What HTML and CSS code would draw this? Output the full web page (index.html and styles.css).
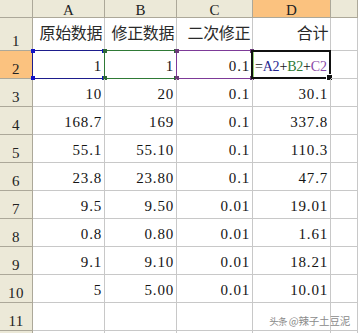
FILE: index.html
```html
<!DOCTYPE html>
<html>
<head>
<meta charset="utf-8">
<link rel="stylesheet" href="styles.css">
</head>
<body>
<div class="sheet">
  <div class="h corner"></div>
  <div class="h col">A</div>
  <div class="h col">B</div>
  <div class="h col">C</div>
  <div class="h col sel">D</div>
  <div class="h col"></div>

  <div class="h row">1</div>
  <div class="c cjk">原始数据</div>
  <div class="c cjk">修正数据</div>
  <div class="c cjk">二次修正</div>
  <div class="c cjk">合计</div>
  <div class="c"></div>

  <div class="h row sel">2</div>
  <div class="c">1<span class="range blue"><i class="hd tl"></i><i class="hd tr"></i><i class="hd bl"></i><i class="hd br"></i></span></div>
  <div class="c">1<span class="range green"><i class="hd tl"></i><i class="hd tr"></i><i class="hd bl"></i><i class="hd br"></i></span></div>
  <div class="c">0.1<span class="range purple"><i class="hd tl"></i><i class="hd tr"></i><i class="hd bl"></i><i class="hd br"></i></span></div>
  <div class="c formula"><span>=</span><span class="fa">A2</span><span>+</span><span class="fb">B2</span><span>+</span><span class="fc">C2</span><span class="caret"></span><span class="active"><i class="fill"></i></span></div>
  <div class="c"></div>

  <div class="h row">3</div>
  <div class="c">10</div><div class="c">20</div><div class="c">0.1</div><div class="c">30.1</div><div class="c"></div>

  <div class="h row">4</div>
  <div class="c">168.7</div><div class="c">169</div><div class="c">0.1</div><div class="c">337.8</div><div class="c"></div>

  <div class="h row">5</div>
  <div class="c">55.1</div><div class="c">55.10</div><div class="c">0.1</div><div class="c">110.3</div><div class="c"></div>

  <div class="h row">6</div>
  <div class="c">23.8</div><div class="c">23.80</div><div class="c">0.1</div><div class="c">47.7</div><div class="c"></div>

  <div class="h row">7</div>
  <div class="c">9.5</div><div class="c">9.50</div><div class="c">0.01</div><div class="c">19.01</div><div class="c"></div>

  <div class="h row">8</div>
  <div class="c">0.8</div><div class="c">0.80</div><div class="c">0.01</div><div class="c">1.61</div><div class="c"></div>

  <div class="h row">9</div>
  <div class="c">9.1</div><div class="c">9.10</div><div class="c">0.01</div><div class="c">18.21</div><div class="c"></div>

  <div class="h row">10</div>
  <div class="c">5</div><div class="c">5.00</div><div class="c">0.01</div><div class="c">10.01</div><div class="c"></div>

  <div class="h row">11</div>
  <div class="c"></div><div class="c"></div><div class="c"></div><div class="c"></div><div class="c"></div>

  <div class="h row"></div>
  <div class="c"></div><div class="c"></div><div class="c"></div><div class="c"></div><div class="c"></div>
</div>
<div class="watermark"><span class="wm-brand">头条</span> @辣子土豆泥</div>
</body>
</html>
```

FILE: styles.css
```css
html, body {
  margin: 0;
  padding: 0;
  background: #ffffff;
  overflow: hidden;
}

body {
  width: 358px;
  height: 333px;
  position: relative;
}

.sheet {
  display: grid;
  height: 333px;
  overflow: hidden;
  grid-template-columns: 33px 72px 72px 76px 78px 1fr;
  grid-template-rows: 18px 33px repeat(10, 28px) 3px;
  font-family: "Liberation Serif", "DejaVu Serif", serif;
  font-size: 15px;
  color: #151515;
}

.c {
  box-sizing: border-box;
  border-right: 1px solid #c8c8c8;
  border-bottom: 1px solid #c8c8c8;
  display: flex;
  justify-content: flex-end;
  align-items: flex-end;
  padding: 0 2px 4px 0;
  line-height: 15px;
  letter-spacing: 0.8px;
  white-space: nowrap;
  position: relative;
  min-height: 0;
}

.cjk {
  font-family: "Noto Sans CJK SC", "Noto Sans CJK JP", sans-serif;
  font-size: 16px;
  line-height: 16px;
  letter-spacing: -0.4px;
  padding: 0 2px 10px 0;
  color: #2a2a2a;
}

.h {
  box-sizing: border-box;
  background: #ece9d8;
  border-right: 1px solid #aca899;
  border-bottom: 1px solid #aca899;
  display: flex;
  justify-content: center;
  align-items: flex-end;
  line-height: 15px;
  color: #222222;
  min-height: 0;
}

.h.col {
  line-height: 13px;
  padding-bottom: 0;
}

.h.row {
  padding-bottom: 1px;
  letter-spacing: 0.4px;
}

.h.sel {
  background: #fbc27f;
}

.range {
  position: absolute;
  left: -1px;
  top: -1px;
  right: -1px;
  bottom: -1px;
  border: 1px solid;
  box-sizing: border-box;
}

.range.blue { border-color: #1d1d8c; }
.range.green { border-color: #2f7a36; }
.range.purple { border-color: #7d3a98; }

.hd {
  position: absolute;
  width: 4px;
  height: 4px;
}

.blue .hd { background: #1010c8; }
.green .hd { background: #2f6a36; }
.purple .hd { background: #6a3a78; }

.hd.tl { left: -2px; top: -2px; }
.hd.tr { right: -2px; top: -2px; }
.hd.bl { left: -2px; bottom: -2px; }
.hd.br { right: -2px; bottom: -2px; }

.formula {
  justify-content: flex-start;
  padding-left: 2px;
  font-size: 14px;
  letter-spacing: -0.2px;
}

.fa { color: #26268f; }
.fb { color: #2f7a36; }
.fc { color: #8a4aa8; }

.caret {
  display: block;
  width: 1px;
  height: 19px;
  background: #000000;
  margin-left: 2px;
  margin-bottom: -2px;
}

.active {
  position: absolute;
  left: -2px;
  top: -1px;
  right: -1px;
  bottom: -1px;
  border: 2px solid #111111;
  box-sizing: border-box;
  box-shadow: inset 1px 0 0 #9ad27a;
}

.fill {
  position: absolute;
  right: -4px;
  bottom: -4px;
  width: 5px;
  height: 5px;
  background: #111111;
  border: 1px solid #ffffff;
}

.watermark {
  position: absolute;
  right: 8px;
  top: 314px;
  white-space: nowrap;
  font-family: "Noto Sans CJK SC", sans-serif;
  font-size: 10.5px;
  line-height: 13px;
  color: #8a8a8a;
  letter-spacing: -0.2px;
  text-shadow: 0 0 1px #ffffff, 0 0 1px #ffffff;
}

.wm-brand {
  font-size: 9.5px;
  letter-spacing: -0.8px;
}
```
